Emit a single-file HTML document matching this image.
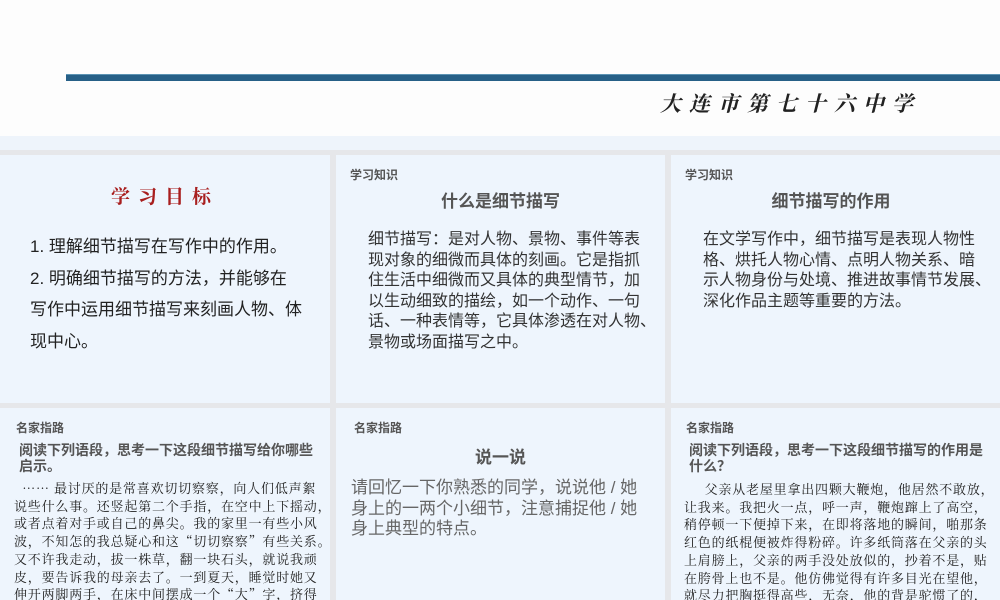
<!DOCTYPE html>
<html style="overflow:hidden;width:1000px;height:600px"><head><meta charset="utf-8"><style>
*{margin:0;padding:0;box-sizing:border-box}
body{width:1000px;height:600px;overflow:hidden;background:#e6e7ea;position:relative;font-family:"Liberation Sans","Noto Sans CJK SC",sans-serif}
.top{position:absolute;left:0;top:0;width:1000px;height:138px;background:#fdfdfd}
.bar{position:absolute;left:66px;top:74px;width:934px;height:7px;background:#276087;border-top:1px solid #5c93b3}
.strip{position:absolute;left:0;top:136px;width:1000px;height:14px;background:#eef4fb}
.logo{position:absolute;left:660px;top:88px;font-family:"Noto Serif CJK SC",serif;font-size:21px;font-weight:700;color:#222;letter-spacing:8px;font-style:italic}
.p{position:absolute;background:#eef5fd;overflow:hidden}
.p div{white-space:nowrap}
.tag{position:absolute;font-size:12px;font-weight:bold;color:#555}
.h{position:absolute;font-size:17px;font-weight:bold;color:#555;text-align:center}
.t{position:absolute;font-size:16px;line-height:20.5px;color:#333}
.s{position:absolute;font-family:"Noto Serif CJK SC",serif;font-size:13px;line-height:17.7px;color:#222;letter-spacing:0.8px}
.q{position:absolute;font-size:14px;line-height:16px;font-weight:bold;color:#555}
</style></head><body>
<div class="top"></div>
<div class="bar"></div>
<div class="logo">大连市第七十六中学</div>
<div class="strip"></div>

<div class="p" style="left:0;top:155px;width:330px;height:248px">
 <div style="position:absolute;left:0;top:27px;width:330px;text-align:center;font-family:'Noto Serif CJK SC',serif;font-size:19px;font-weight:bold;color:#a81e1e;letter-spacing:8px">学习目标</div>
 <div style="position:absolute;left:30px;top:76px;font-size:17px;line-height:31.5px;color:#222">1. 理解细节描写在写作中的作用。<br>2. 明确细节描写的方法，并能够在<br>写作中运用细节描写来刻画人物、体<br>现中心。</div>
</div>
<div class="p" style="left:336px;top:155px;width:329px;height:248px">
 <div class="tag" style="left:14px;top:11px">学习知识</div>
 <div class="h" style="left:0;top:32px;width:329px">什么是细节描写</div>
 <div class="t" style="left:32px;top:75px">细节描写：是对人物、景物、事件等表<br>现对象的细微而具体的刻画。它是指抓<br>住生活中细微而又具体的典型情节，加<br>以生动细致的描绘，如一个动作、一句<br>话、一种表情等，它具体渗透在对人物、<br>景物或场面描写之中。</div>
</div>
<div class="p" style="left:671px;top:155px;width:329px;height:248px">
 <div class="tag" style="left:14px;top:11px">学习知识</div>
 <div class="h" style="left:0;top:32px;width:320px">细节描写的作用</div>
 <div class="t" style="left:32px;top:75px">在文学写作中，细节描写是表现人物性<br>格、烘托人物心情、点明人物关系、暗<br>示人物身份与处境、推进故事情节发展、<br>深化作品主题等重要的方法。</div>
</div>

<div class="p" style="left:0;top:408px;width:330px;height:192px">
 <div class="tag" style="left:16px;top:11px">名家指路</div>
 <div class="q" style="left:19px;top:34px">阅读下列语段，思考一下这段细节描写给你哪些<br>启示。</div>
 <div class="s" style="left:14px;top:71px">&nbsp;&nbsp;…… 最讨厌的是常喜欢切切察察，向人们低声絮<br>说些什么事。还竖起第二个手指，在空中上下摇动，<br>或者点着对手或自己的鼻尖。我的家里一有些小风<br>波，不知怎的我总疑心和这“切切察察”有些关系。<br>又不许我走动，拔一株草，翻一块石头，就说我顽<br>皮，要告诉我的母亲去了。一到夏天，睡觉时她又<br>伸开两脚两手，在床中间摆成一个“大”字，挤得<br>我没有余地翻身。</div>
</div>
<div class="p" style="left:336px;top:408px;width:329px;height:192px">
 <div class="tag" style="left:18px;top:11px">名家指路</div>
 <div class="h" style="left:0;top:35px;width:329px">说一说</div>
 <div class="t" style="left:15px;top:70px;font-size:17px;line-height:20.5px;color:#666">请回忆一下你熟悉的同学，说说他 / 她<br>身上的一两个小细节，注意捕捉他 / 她<br>身上典型的特点。</div>
</div>
<div class="p" style="left:671px;top:408px;width:329px;height:192px">
 <div class="tag" style="left:15px;top:11px">名家指路</div>
 <div class="q" style="left:18px;top:34px">阅读下列语段，思考一下这段细节描写的作用是<br>什么？</div>
 <div class="s" style="left:13px;top:72px">&nbsp;&nbsp;&nbsp;&nbsp;&nbsp;父亲从老屋里拿出四颗大鞭炮，他居然不敢放，<br>让我来。我把火一点，呼一声，鞭炮蹿上了高空，<br>稍停顿一下便掉下来，在即将落地的瞬间，啪那条<br>红色的纸棍便被炸得粉碎。许多纸筒落在父亲的头<br>上肩膀上，父亲的两手没处放似的，抄着不是，贴<br>在胯骨上也不是。他仿佛觉得有许多目光在望他，<br>就尽力把胸挺得高些，无奈，他的背是驼惯了的，<br>驼了背的人。</div>
</div>
</body></html>
